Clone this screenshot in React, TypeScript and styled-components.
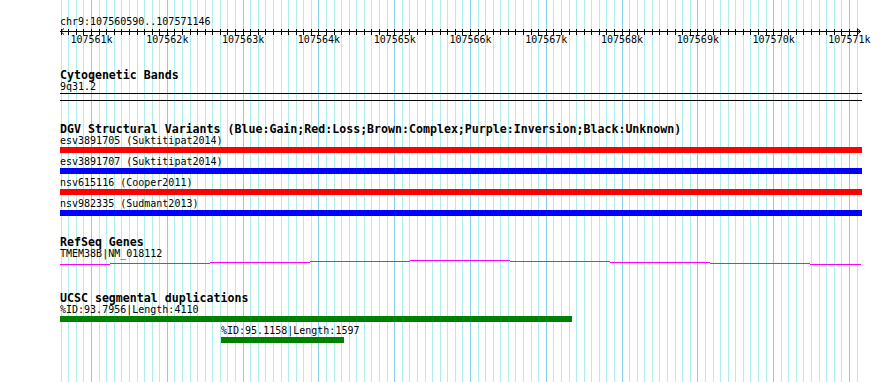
import React from 'react'
import styled, { createGlobalStyle } from 'styled-components'

const START = 107560590
const END = 107571146
const LEFT = 60
const SPAN = 800

const toX = (pos: number) => LEFT + ((pos - START) * SPAN) / (END - START)

const GlobalStyle = createGlobalStyle`
  html, body {
    margin: 0;
    padding: 0;
    background: #ffffff;
  }
`

interface Feature {
  label: string
  color: string
  offset: number
  width: number
}

const dgvVariants: Feature[] = [
  { label: 'esv3891705 (Suktitipat2014)', color: '#ff0000', offset: 0, width: 802 },
  { label: 'esv3891707 (Suktitipat2014)', color: '#0000ff', offset: 0, width: 802 },
  { label: 'nsv615116 (Cooper2011)', color: '#ff0000', offset: 0, width: 802 },
  { label: 'nsv982335 (Sudmant2013)', color: '#0000ff', offset: 0, width: 802 },
]

const segDups: Feature[] = [
  { label: '%ID:93.7956|Length:4110', color: '#008000', offset: 0, width: 512 },
  { label: '%ID:95.1158|Length:1597', color: '#008000', offset: 161, width: 123 },
]

// gene line drawn as a shallow "hat", in 100px steps
const geneSteps = [
  [0, 50, 4], [50, 150, 3], [150, 250, 2], [250, 350, 1], [350, 450, 0],
  [450, 550, 1], [550, 650, 2], [650, 750, 3], [750, 801, 4],
]

const gridPositions: number[] = []
for (let p = 107560600; p <= END; p += 100) gridPositions.push(p)

const Canvas = styled.div`
  position: relative;
  width: 890px;
  height: 382px;
  overflow: hidden;
  font-family: "DejaVu Sans Mono", "Liberation Mono", monospace;
  color: #000;
`

const GridLayer = styled.svg`
  position: absolute;
  inset: 0;
  z-index: 0;
`

const Content = styled.div`
  position: relative;
  z-index: 1;
  padding: 16px 0 0 60px;
`

const Label = styled.div<{ $offset?: number }>`
  font-size: 10px;
  line-height: 12px;
  height: 12px;
  white-space: nowrap;
  padding-left: ${p => p.$offset || 0}px;
`

const AxisSvg = styled.svg`
  display: block;
  overflow: visible;

  text {
    font-family: "DejaVu Sans Mono", "Liberation Mono", monospace;
    font-size: 10px;
    fill: #000;
  }
`

const Track = styled.section<{ $gap: number }>`
  margin-top: ${p => p.$gap}px;
`

const TrackTitle = styled.div`
  font-size: 11.6px;
  font-weight: bold;
  line-height: 12px;
  height: 12px;
  white-space: nowrap;
`

const Band = styled.div`
  box-sizing: border-box;
  width: 802px;
  height: 8px;
  border-top: 1px solid #000;
  border-bottom: 1px solid #000;
`

const FeatureRow = styled.div`
  margin-bottom: 3px;
`

const FeatureBar = styled.div<{ $color: string }>`
  height: 6px;
  background: ${p => p.$color};
`

const GeneSvg = styled.svg`
  display: block;
`

const Ruler = () => {
  const ticks = gridPositions.map(p => toX(p) - LEFT)
  const majors = gridPositions.filter(p => p % 1000 === 0)
  return (
    <div>
      <Label>chr9:107560590..107571146</Label>
      <AxisSvg width={810} height={20}>
        <line x1={0} y1={3.5} x2={801} y2={3.5} stroke="#000" />
        <polyline points="4,0.5 0.5,3.5 4,6.5" fill="none" stroke="#000" />
        <polyline points="797,0.5 800.5,3.5 797,6.5" fill="none" stroke="#000" />
        {ticks.map((x, i) => (
          <line key={i} x1={Math.round(x) + 0.5} y1={1} x2={Math.round(x) + 0.5} y2={7} stroke="#000" />
        ))}
        {majors.map(p => (
          <text key={p} x={toX(p) - LEFT + 0.5} y={15} textAnchor="middle">
            {p / 1000}k
          </text>
        ))}
      </AxisSvg>
    </div>
  )
}

const FeatureList = ({ items }: { items: Feature[] }) => (
  <>
    {items.map(f => (
      <FeatureRow key={f.label}>
        <Label $offset={f.offset}>{f.label}</Label>
        <FeatureBar $color={f.color} style={{ marginLeft: f.offset, width: f.width }} />
      </FeatureRow>
    ))}
  </>
)

const App = () => {
  return (
    <Canvas>
      <GlobalStyle />
      <GridLayer width={890} height={382}>
        {gridPositions.map(p => {
          const x = Math.round(toX(p)) + 0.5
          const major = p % 1000 === 0
          return (
            <line key={p} x1={x} y1={0} x2={x} y2={382} stroke={major ? '#87ceeb' : '#afeeee'} />
          )
        })}
      </GridLayer>
      <Content>
        <Ruler />

        <Track $gap={21}>
          <TrackTitle>Cytogenetic Bands</TrackTitle>
          <Label>9q31.2</Label>
          <Band />
        </Track>

        <Track $gap={22}>
          <TrackTitle>DGV Structural Variants (Blue:Gain;Red:Loss;Brown:Complex;Purple:Inversion;Black:Unknown)</TrackTitle>
          <FeatureList items={dgvVariants} />
        </Track>

        <Track $gap={20}>
          <TrackTitle>RefSeq Genes</TrackTitle>
          <Label>TMEM38B|NM_018112</Label>
          <GeneSvg width={802} height={6}>
            {geneSteps.map(([x1, x2, y]) => (
              <rect key={x1} x={x1} y={y} width={x2 - x1} height={1} fill="#ff00ff" />
            ))}
          </GeneSvg>
        </Track>

        <Track $gap={26}>
          <TrackTitle>UCSC segmental duplications</TrackTitle>
          <FeatureList items={segDups} />
        </Track>
      </Content>
    </Canvas>
  )
}

export default App
